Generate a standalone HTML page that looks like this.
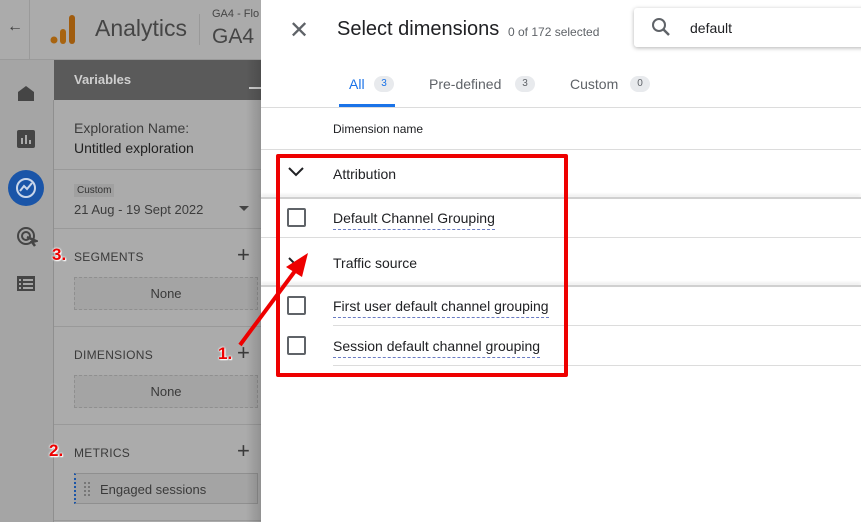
<!DOCTYPE html><html><head><style>
*{box-sizing:border-box;margin:0;padding:0}
body{width:861px;height:522px;overflow:hidden;position:relative;font-family:"Liberation Sans",Arial,sans-serif;background:#fff}
.a{position:absolute}
.t{color:#3c3c3c}
.sec{font-size:12px;color:#3a3a3a;letter-spacing:.3px}
.box{border:1px dashed #8f8f8f;background:#a4a4a4;text-align:center;font-size:13px;color:#3a3a3a;line-height:31px}
.plus{font-size:22px;color:#3a3a3a;font-weight:300}
.num{color:#e00;font-weight:bold;font-size:17px;text-shadow:0 0 2px #fff,0 0 2px #fff,1px 1px 1px #fff}
.row{position:absolute;left:261px;right:0;border-top:1px solid #dcdcdc}
.cb{position:absolute;left:287px;width:19px;height:19px;border:2px solid #5f6368;border-radius:2px}
.dim{position:absolute;left:333px;font-size:14px;color:#202124;border-bottom:1px dashed #6b7dc4;padding-bottom:3px}
</style></head><body>
<div class="a" style="left:0;top:0;width:261px;height:522px;background:#ababab"></div>
<div class="a" style="left:0;top:59px;width:54px;height:463px;background:#a5a5a5"></div>
<div class="a" style="left:29px;top:0;width:1px;height:59px;background:#9a9a9a"></div>
<div class="a" style="left:0;top:59px;width:261px;height:1px;background:#9a9a9a"></div>
<div class="a t" style="left:7px;top:18px;font-size:16px">←</div>
<svg class="a" style="left:48px;top:12px" width="30" height="34"><circle cx="6" cy="28" r="3.5" fill="#a86410"/><rect x="12" y="17" width="6" height="15" rx="3" fill="#a86410"/><rect x="21" y="3" width="6" height="29" rx="3" fill="#a05c0e"/></svg>
<div class="a" style="left:95px;top:15px;font-size:23px;color:#454545">Analytics</div>
<div class="a" style="left:199px;top:14px;width:1px;height:31px;background:#999"></div>
<div class="a" style="left:212px;top:8px;font-size:11px;color:#454545">GA4 - Flo</div>
<div class="a" style="left:212px;top:25px;font-size:21px;color:#454545">GA4</div>
<div class="a" style="left:54px;top:60px;width:207px;height:40px;background:#5a5a5a"></div>
<div class="a" style="left:74px;top:72px;font-size:13px;font-weight:bold;color:#cfcfcf">Variables</div>
<div class="a" style="left:249px;top:87px;width:12px;height:2px;background:#cfcfcf"></div>
<div class="a" style="left:53px;top:100px;width:1px;height:422px;background:#8f8f8f"></div>
<svg class="a" style="left:16px;top:84px" width="20" height="18"><path d="M2 8L10 2L18 8V17H2Z" fill="#454545"/></svg>
<svg class="a" style="left:17px;top:130px" width="18" height="18"><rect width="18" height="18" rx="2" fill="#454545"/><rect x="4" y="8" width="2" height="6" fill="#aaa"/><rect x="8" y="5" width="2" height="9" fill="#aaa"/><rect x="12" y="10" width="2" height="4" fill="#aaa"/></svg>
<svg class="a" style="left:8px;top:170px" width="36" height="36"><circle cx="18" cy="18" r="18" fill="#1a55a8"/><circle cx="18" cy="18" r="9" fill="none" stroke="#c9d6ea" stroke-width="2"/><path d="M12 21L16 16L19 19L24 13" stroke="#c9d6ea" stroke-width="2" fill="none"/></svg>
<svg class="a" style="left:16px;top:226px" width="22" height="22"><circle cx="10" cy="10" r="8" fill="none" stroke="#454545" stroke-width="2"/><circle cx="10" cy="10" r="4" fill="none" stroke="#454545" stroke-width="2"/><path d="M11 11L20 15L16 16L19 20" stroke="#454545" stroke-width="2.5" fill="none"/></svg>
<svg class="a" style="left:17px;top:276px" width="18" height="15"><rect width="18" height="15" fill="#454545"/><g fill="#a5a5a5"><rect x="2" y="3" width="2" height="2"/><rect x="2" y="7" width="2" height="2"/><rect x="2" y="11" width="2" height="2"/><rect x="6" y="3" width="10" height="2"/><rect x="6" y="7" width="10" height="2"/><rect x="6" y="11" width="10" height="2"/></g></svg>
<div class="a t" style="left:74px;top:120px;font-size:14px">Exploration Name:</div>
<div class="a" style="left:74px;top:140px;font-size:14px;color:#222">Untitled exploration</div>
<div class="a" style="left:54px;top:169px;width:207px;height:1px;background:#999"></div>
<div class="a" style="left:74px;top:184px;font-size:10px;background:#a0a0a0;padding:1px 3px;color:#333">Custom</div>
<div class="a t" style="left:74px;top:202px;font-size:13px">21 Aug - 19 Sept 2022</div>
<div class="a" style="left:239px;top:206px;border:5px solid transparent;border-top-color:#444"></div>
<div class="a" style="left:54px;top:228px;width:207px;height:1px;background:#999"></div>
<div class="a sec" style="left:74px;top:250px">SEGMENTS</div><div class="a plus" style="left:237px;top:242px">+</div>
<div class="a box" style="left:74px;top:277px;width:184px;height:33px">None</div>
<div class="a" style="left:54px;top:326px;width:207px;height:1px;background:#999"></div>
<div class="a sec" style="left:74px;top:348px">DIMENSIONS</div><div class="a plus" style="left:237px;top:340px">+</div>
<div class="a box" style="left:74px;top:375px;width:184px;height:33px">None</div>
<div class="a" style="left:54px;top:424px;width:207px;height:1px;background:#999"></div>
<div class="a sec" style="left:74px;top:446px">METRICS</div><div class="a plus" style="left:237px;top:438px">+</div>
<div class="a box" style="left:74px;top:473px;width:184px;height:31px;border-style:solid;border-left:2px dotted #1a55a8;text-align:left;padding-left:24px">Engaged sessions</div>
<div class="a" style="left:84px;top:482px;width:6px;height:14px;border-left:2px dotted #777;border-right:2px dotted #777"></div>
<div class="a" style="left:54px;top:520px;width:207px;height:1px;background:#999"></div>
<div class="a num" style="left:52px;top:245px">3.</div>
<div class="a num" style="left:218px;top:344px">1.</div>
<div class="a num" style="left:49px;top:441px">2.</div>
<div class="a" style="left:246px;top:60px;width:15px;height:462px;background:linear-gradient(90deg,rgba(0,0,0,0),rgba(0,0,0,.15))"></div>
<div class="a" style="left:289px;top:16px;font-size:24px;color:#5f6368;font-weight:300">✕</div>
<div class="a" style="left:337px;top:18px;font-size:20px;color:#202124">Select dimensions</div>
<div class="a" style="left:508px;top:25px;font-size:12px;color:#5f6368">0 of 172 selected</div>
<div class="a" style="left:634px;top:8px;width:240px;height:39px;background:#fff;box-shadow:0 1px 4px rgba(0,0,0,.3);border-radius:3px"></div>
<svg class="a" style="left:651px;top:17px" width="20" height="20"><circle cx="8" cy="8" r="6" fill="none" stroke="#5f6368" stroke-width="2"/><path d="M12.5 12.5L18 18" stroke="#5f6368" stroke-width="2.5"/></svg>
<div class="a" style="left:690px;top:20px;font-size:14px;color:#202124">default</div>
<div class="a" style="left:349px;top:76px;font-size:14px;color:#1a73e8">All</div>
<div class="a" style="left:374px;top:76px;width:20px;height:16px;border-radius:8px;background:#e8eaed;font-size:10px;color:#1a73e8;text-align:center;line-height:16px">3</div>
<div class="a" style="left:339px;top:104px;width:56px;height:3px;background:#1a73e8"></div>
<div class="a" style="left:429px;top:76px;font-size:14px;color:#5f6368">Pre-defined</div>
<div class="a" style="left:515px;top:76px;width:20px;height:16px;border-radius:8px;background:#e8eaed;font-size:10px;color:#5f6368;text-align:center;line-height:16px">3</div>
<div class="a" style="left:570px;top:76px;font-size:14px;color:#5f6368">Custom</div>
<div class="a" style="left:630px;top:76px;width:20px;height:16px;border-radius:8px;background:#e8eaed;font-size:10px;color:#5f6368;text-align:center;line-height:16px">0</div>
<div class="row" style="top:107px"></div>
<div class="a" style="left:333px;top:122px;font-size:12px;color:#202124">Dimension name</div>
<div class="row" style="top:149px"></div>
<svg class="a" style="left:287px;top:166px" width="18" height="12"><path d="M2 2L9 9L16 2" stroke="#202124" stroke-width="2" fill="none"/></svg>
<div class="a" style="left:333px;top:166px;font-size:14px;color:#202124">Attribution</div>
<div class="row" style="top:197px;border-top:2px solid #d0d0d0;box-shadow:0 -2px 3px rgba(0,0,0,.12)"></div>
<div class="cb" style="top:208px"></div><div class="dim" style="top:210px">Default Channel Grouping</div>
<div class="row" style="top:237px"></div>
<svg class="a" style="left:287px;top:256px" width="18" height="12"><path d="M2 2L9 9L16 2" stroke="#202124" stroke-width="2" fill="none"/></svg>
<div class="a" style="left:333px;top:255px;font-size:14px;color:#202124">Traffic source</div>
<div class="row" style="top:285px;border-top:2px solid #d0d0d0;box-shadow:0 -2px 3px rgba(0,0,0,.12)"></div>
<div class="cb" style="top:296px"></div><div class="dim" style="top:298px">First user default channel grouping</div>
<div class="a" style="left:333px;top:325px;right:0;height:1px;background:#dcdcdc"></div>
<div class="cb" style="top:336px"></div><div class="dim" style="top:338px">Session default channel grouping</div>
<div class="a" style="left:333px;top:365px;right:0;height:1px;background:#dcdcdc"></div>
<div class="a" style="left:276px;top:154px;width:292px;height:223px;border:4px solid #ee0000;border-radius:2px"></div>
<svg class="a" style="left:230px;top:245px" width="90" height="110"><path d="M10 100L68 22" stroke="#ee0000" stroke-width="4"/><path d="M78 8L56 22L72 32Z" fill="#ee0000"/></svg>
</body></html>
